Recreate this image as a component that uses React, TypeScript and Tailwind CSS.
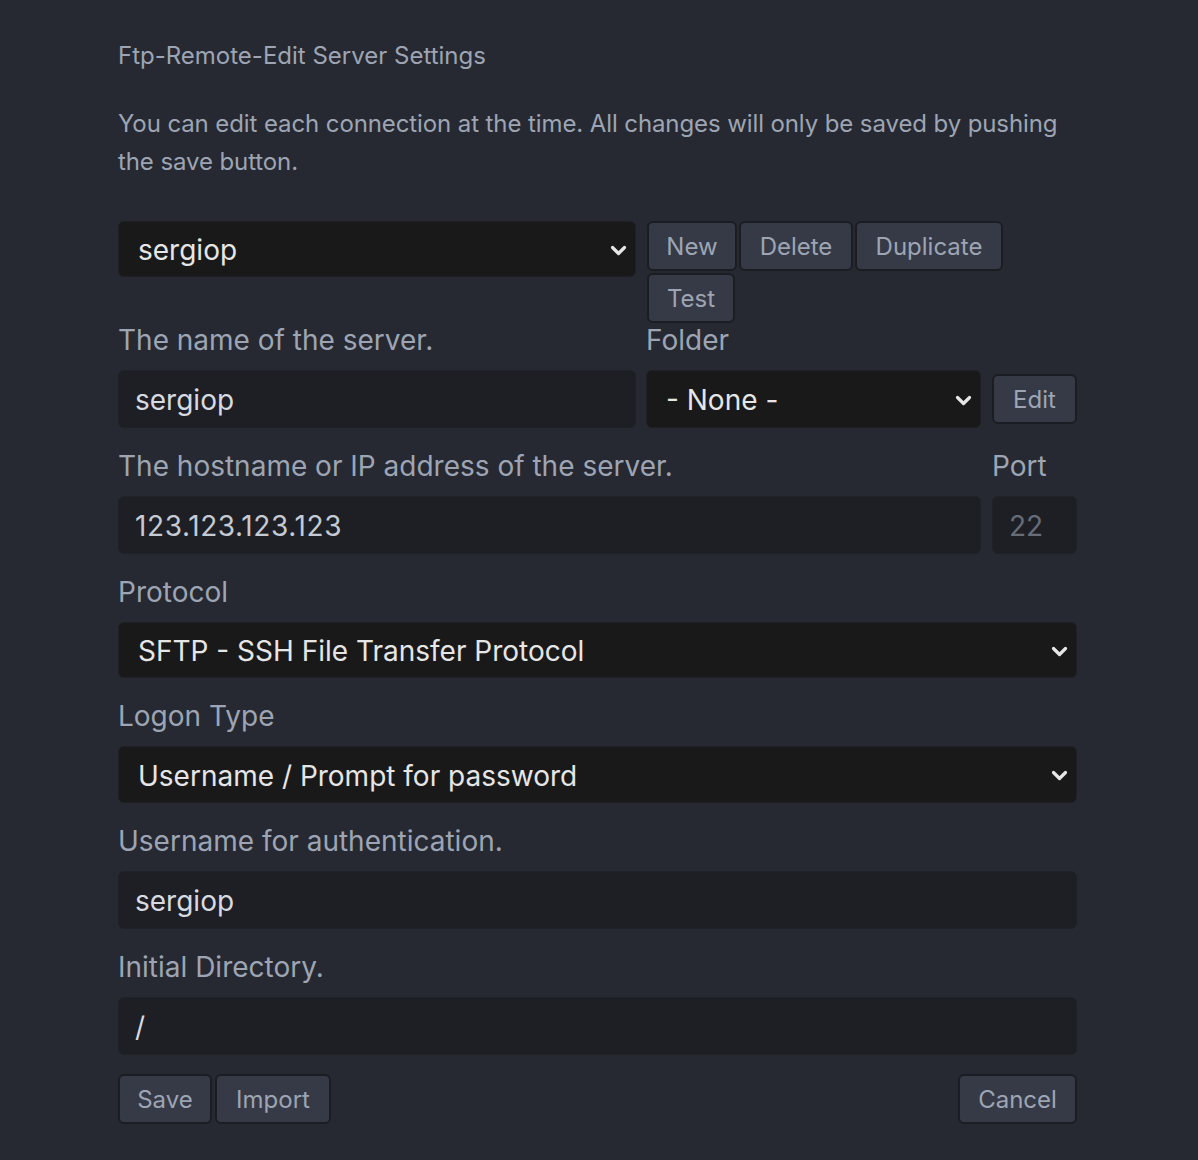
import type {ReactNode} from "react";

const font = {fontFamily: "Inter, 'Noto Sans', sans-serif"};

function Chevron() {
    return (
        <svg width="17" height="11" viewBox="0 0 17 11" className="shrink-0">
            <polyline points="2.5,2.5 8.5,8.5 14.5,2.5" fill="none" stroke="#e6e6e6" strokeWidth="3.2"
                      strokeLinecap="round" strokeLinejoin="round"/>
        </svg>
    )
}

function Select({value, className = ""}: { value: string, className?: string }) {
    return (
        <div
            className={`bg-[#19191a] rounded-[6px] border border-[#1e2025] flex items-center justify-between pl-[19px] pr-[8px] pt-[2px] text-[28px] text-[#e6e6e6] ${className}`}>
            <span>{value}</span>
            <Chevron/>
        </div>
    )
}

function Input({value, dim = false, className = ""}: { value: string, dim?: boolean, className?: string }) {
    return (
        <div
            className={`h-[58px] bg-[#1d1f24] rounded-[6px] border border-[#1f2227] flex items-center pl-[16px] pt-[2px] text-[28px] ${dim ? "text-[#676d78]" : "text-[#c5cad3]"} ${className}`}>
            {value}
        </div>
    )
}

function Button({children, className = ""}: { children: ReactNode, className?: string }) {
    return (
        <button type="button"
                className={`h-[50px] pt-[2px] bg-[#363a46] border-2 border-[#1b1d22] rounded-[6px] text-[24px] text-[#9da5b4] leading-none ${className}`}>
            {children}
        </button>
    )
}

function Label({children, first = false}: { children: ReactNode, first?: boolean }) {
    return (
        <p className={`text-[28px] leading-[30px] text-[#9da5b4] mb-[15px] ${first ? "mt-[2px]" : "mt-[23px]"}`}>
            {children}
        </p>
    )
}

export default function App() {
    return (
        <div className="min-h-[1160px] w-full bg-[#262931] pl-[118px] pt-[40px]" style={font}>
            <div className="w-[959px]">
                <h1 className="text-[24px] leading-[32px] text-[#9da5b4]">Ftp-Remote-Edit Server Settings</h1>

                <p className="text-[24px] leading-[38px] text-[#9da5b4] mt-[33px] tracking-[-0.1px]">
                    You can edit each connection at the time. All changes will only be saved by pushing the save button.
                </p>

                <div className="flex gap-[11px] mt-[40px]">
                    <Select value="sergiop" className="w-[518px] h-[56px]"/>
                    <div className="flex-1 flex flex-wrap gap-[2px] content-start">
                        <Button className="w-[90px]">New</Button>
                        <Button className="w-[114px]">Delete</Button>
                        <Button className="w-[148px]">Duplicate</Button>
                        <Button className="w-[88px]">Test</Button>
                    </div>
                </div>

                <div className="flex gap-[10px]">
                    <div className="w-[518px]">
                        <Label first>The name of the server.</Label>
                        <Input value="sergiop" className="text-[#d7dae0]"/>
                    </div>
                    <div className="flex-1">
                        <Label first>Folder</Label>
                        <div className="flex items-center gap-[11px]">
                            <Select value="- None -" className="w-[335px] h-[58px]"/>
                            <Button className="w-[85px]">Edit</Button>
                        </div>
                    </div>
                </div>

                <div className="flex gap-[11px]">
                    <div className="flex-1">
                        <Label>The hostname or IP address of the server.</Label>
                        <Input value="123.123.123.123" className="tracking-[0.6px]"/>
                    </div>
                    <div className="w-[85px]">
                        <Label>Port</Label>
                        <Input value="22" dim/>
                    </div>
                </div>

                <Label>Protocol</Label>
                <Select value="SFTP - SSH File Transfer Protocol" className="h-[56px]"/>

                <Label>Logon Type</Label>
                <Select value="Username / Prompt for password" className="h-[57px]"/>

                <Label>Username for authentication.</Label>
                <Input value="sergiop" className="text-[#d7dae0]"/>

                <Label>Initial Directory.</Label>
                <Input value="/" className="text-[#d7dae0]"/>

                <div className="flex items-center justify-between mt-[19px]">
                    <div className="flex gap-[3px]">
                        <Button className="w-[94px]">Save</Button>
                        <Button className="w-[116px]">Import</Button>
                    </div>
                    <Button className="w-[119px]">Cancel</Button>
                </div>
            </div>
        </div>
    )
}
